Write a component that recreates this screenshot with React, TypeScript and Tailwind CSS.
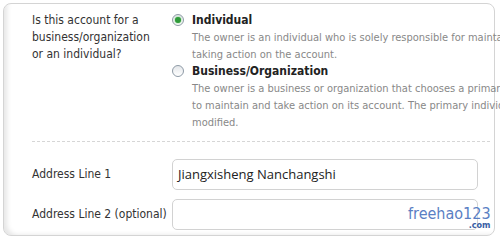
import React from "react";

const font = { fontFamily: '"DejaVu Sans Condensed", "DejaVu Sans", Tahoma, sans-serif' };

function Radio({ checked }: { checked?: boolean }) {
    return (
        <span className="mt-[2px] flex h-[12px] w-[12px] shrink-0 items-center justify-center rounded-full border border-[#8e9aa6] bg-gradient-to-b from-[#e4e7ea] to-white">
            {checked && <span className="h-[6px] w-[6px] rounded-full bg-[#2f9a3a] shadow-[0_0_2px_#6c6]"></span>}
        </span>
    );
}

export default function App() {
    return (
        <div className="relative h-[240px] w-[500px] overflow-hidden bg-white text-[12px] leading-[17px] text-[#333]" style={font}>
            <div className="ml-[3px] mt-[3px] h-[233px] w-[492px] rounded-[8px] border border-[#d4d4d4] bg-white shadow-[inset_7px_-4px_5px_-4px_#e6e6e6]">
                {/* account type */}
                <div className="flex pl-[28px] pt-[8px]">
                    <div className="w-[140px] shrink-0">
                        Is this account for a<br />business/organization<br />or an individual?
                    </div>
                    <div className="flex flex-col">
                        <div className="flex gap-[8px]">
                            <Radio checked />
                            <div>
                                <div className="font-semibold text-[#222]">Individual</div>
                                <div className="whitespace-nowrap text-[11px] text-[#888]">
                                    The owner is an individual who is solely responsible for maintaining and<br />
                                    taking action on the account.
                                </div>
                            </div>
                        </div>
                        <div className="flex gap-[8px]">
                            <Radio />
                            <div>
                                <div className="font-semibold text-[#222]">Business/Organization</div>
                                <div className="whitespace-nowrap text-[11px] text-[#888]">
                                    The owner is a business or organization that chooses a primary individual<br />
                                    to maintain and take action on its account. The primary individual cannot be<br />
                                    modified.
                                </div>
                            </div>
                        </div>
                    </div>
                </div>

                <div className="ml-[28px] mr-[4px] mt-[10px] border-t border-dashed border-[#d6d6d6]"></div>

                {/* address */}
                <div className="mt-[17px] flex flex-col gap-[9px] pl-[28px]">
                    <div className="flex items-center">
                        <div className="w-[140px] shrink-0">Address Line 1</div>
                        <div className="flex h-[31px] w-[306px] items-center rounded-[5px] border border-[#d2d2d2] bg-white pl-[5px] text-[13px] text-[#222]" style={{ fontFamily: '"Open Sans", "Noto Sans", sans-serif' }}>
                            Jiangxisheng Nanchangshi
                        </div>
                    </div>
                    <div className="flex items-center">
                        <div className="w-[140px] shrink-0">Address Line 2 (optional)</div>
                        <div className="h-[31px] w-[306px] rounded-[5px] border border-[#d2d2d2] bg-white"></div>
                    </div>
                </div>
            </div>

            {/* watermark */}
            <div className="absolute left-[408px] top-[204px] flex flex-col items-end text-[#5a7fc4]" style={{ fontFamily: '"DejaVu Sans Condensed", "DejaVu Sans", sans-serif' }}>
                <span className="text-[16px] leading-[19px] [text-shadow:0_0_2px_#fff]">freehao123</span>
                <span className="-mt-[3px] text-[9px] font-bold leading-[10px] text-[#3a5fa4]">.com</span>
            </div>
        </div>
    );
}
